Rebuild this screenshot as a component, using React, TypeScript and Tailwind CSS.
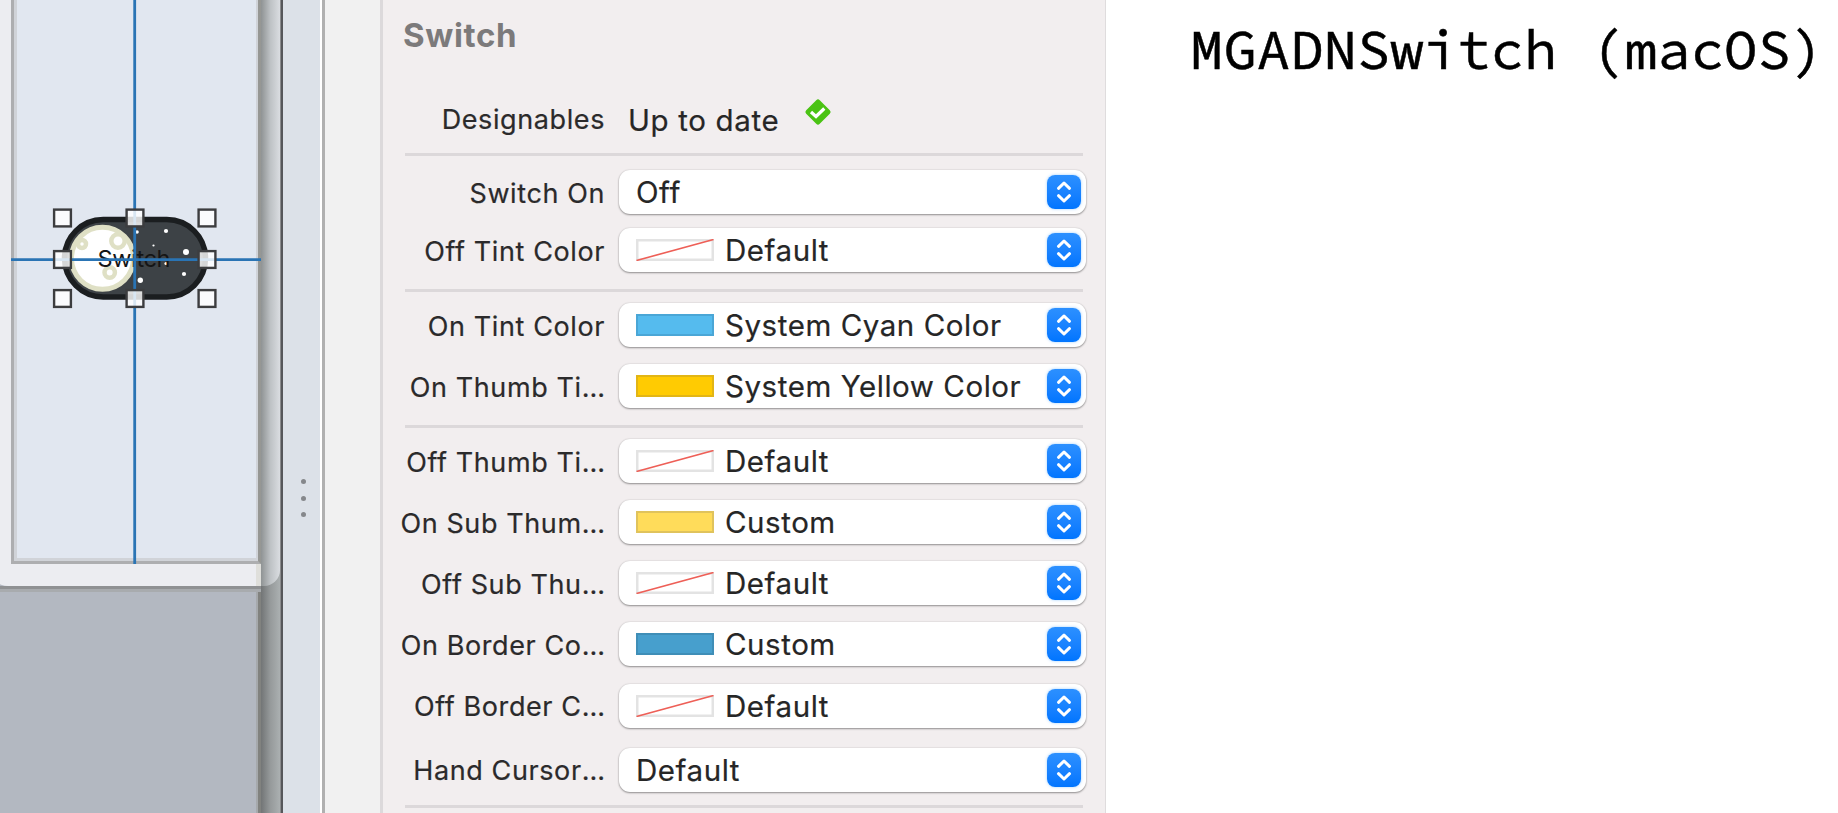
type Swatch = "none" | "cyan" | "yellow" | "lightYellow" | "blue";

const swatchClass: Record<Exclude<Swatch, "none">, string> = {
  cyan: "bg-[#55bbee] border-[#4aa6d6]",
  yellow: "bg-[#ffcb02] border-[#e2b515]",
  lightYellow: "bg-[#ffdc5a] border-[#e0c35c]",
  blue: "bg-[#479fcd] border-[#3f8eb7]",
};

function ColorWell({ swatch }: { swatch: Swatch }) {
  if (swatch === "none") {
    return (
      <svg width="78" height="22" className="mr-[11px] shrink-0">
        <rect x="1.25" y="1.25" width="75.5" height="19.5" fill="#fff" stroke="#e3e3e3" strokeWidth="2.5" />
        <path d="M0.5 21.5L77.5 0.5" stroke="#ee5f57" strokeWidth="1.6" />
      </svg>
    );
  }
  return <span className={`mr-[11px] h-[22px] w-[78px] shrink-0 border-2 ${swatchClass[swatch]}`} />;
}

function PopUp({ value, swatch }: { value: string; swatch?: Swatch }) {
  return (
    <div className="flex h-[44px] w-[467px] items-center rounded-[11px] bg-white pr-[5px] pl-[17px] shadow-[0_1px_2px_rgba(0,0,0,0.38),0_0_2px_rgba(0,0,0,0.14)]">
      {swatch && <ColorWell swatch={swatch} />}
      <span className="flex-1 text-[29.5px] leading-[44px] tracking-[0.55px] whitespace-nowrap text-[#262626] [-webkit-text-stroke:0.2px_#262626]">{value}</span>
      <span className="flex h-[34px] w-[34px] items-center justify-center rounded-[8px] bg-linear-to-b from-[#2c90ff] to-[#0075ff] shadow-[0_0_3px_rgba(60,160,255,0.5)]">
        <svg width="16" height="24" fill="none" stroke="#fff" strokeWidth="3" strokeLinecap="round" strokeLinejoin="round">
          <path d="M2.5 8.3L8 3L13.5 8.3M2.5 15.7L8 21L13.5 15.7" />
        </svg>
      </span>
    </div>
  );
}

function Label({ text }: { text: string }) {
  const truncated = text.endsWith("...");
  return (
    <span className="w-[222px] pt-[3px] text-right text-[27px] leading-[44px] tracking-[0.6px] whitespace-nowrap text-[#2b2a2b] [-webkit-text-stroke:0.2px_#2b2a2b]">
      {truncated ? text.slice(0, -3) : text}
      {truncated && <span className="tracking-[0px]">...</span>}
    </span>
  );
}

function Row({ label, value, swatch, className }: { label: string; value: string; swatch?: Swatch; className: string }) {
  return (
    <div className={`flex h-[44px] items-center gap-[14px] ${className}`}>
      <Label text={label} />
      <PopUp value={value} swatch={swatch} />
    </div>
  );
}

function Divider({ className }: { className: string }) {
  return <div className={`ml-[22px] h-[3px] w-[678px] bg-[#dcd8da] ${className}`} />;
}

const handles = [
  [62.5, 218], [135, 218], [207, 218],
  [62.5, 259.5], [207, 259.5],
  [62.5, 298.5], [135, 298.5], [207, 298.5],
];

const stars = [
  [137, 232, 1.8], [166, 231, 2.1], [153.5, 245.5, 1.1], [186, 252, 3],
  [166, 263.5, 1.6], [184, 274, 2.1], [140.3, 280.3, 2.7],
];

function SwitchArtwork() {
  return (
    <svg className="absolute top-0 left-0" width="261" height="564">
      <rect x="64.5" y="219.5" width="141" height="77.5" rx="38.7" fill="#3d4246" stroke="#1b1e20" strokeWidth="5.5" />
      <circle cx="102.5" cy="258.3" r="31" fill="#fff" stroke="#dfe0c5" strokeWidth="5" />
      <circle cx="118" cy="241" r="6.7" fill="#fff" stroke="#dfe0c5" strokeWidth="4.5" />
      <circle cx="82" cy="244" r="4" fill="#fff" stroke="#dfe0c5" strokeWidth="4.5" />
      <circle cx="109.7" cy="272.5" r="5.2" fill="#fff" stroke="#dfe0c5" strokeWidth="4.5" />
      {stars.map(([x, y, r]) => (
        <circle key={`${x}-${y}`} cx={x} cy={y} r={r} fill="#fff" />
      ))}
      <text x="97.5" y="267" fontSize="23.5" textLength="73" fill="#151515" fontFamily="Inter, sans-serif">Switch</text>
      <path d="M134.7 0V564M11 259.6H261" stroke="#2a74b4" strokeWidth="2.8" />
      {handles.map(([x, y]) => (
        <rect key={`${x}-${y}`} x={x - 8.4} y={y - 8.4} width="16.8" height="16.8" fill="#fff" fillOpacity="0.82" stroke="#3c3d3f" strokeWidth="2.4" />
      ))}
    </svg>
  );
}

function Canvas() {
  return (
    <div className="relative flex h-full w-[261px] flex-col overflow-hidden bg-[#b3b8c1]">
      <div className="-ml-[10px] h-[586px] rounded-bl-[18px] bg-[#ecedf1] pl-[21px]">
        <div className="h-[564px] w-[250px] border-r-[3px] border-b-[3px] border-l-[3px] border-[#adaeb0] border-r-[#969794]">
          <div className="h-full border-r-2 border-b-[3px] border-l-[3px] border-[#d0d3d8] bg-[#e1e7f0]" />
        </div>
        <div className="ml-auto h-[22px] w-[5px] bg-[#dfdfdb]" />
      </div>
      <div className="h-[3px] shrink-0 bg-[#8f9193]" />
      <div className="h-[3px] shrink-0 bg-[#a8abae]" />
      <div className="ml-auto w-[5px] flex-1 border-r-[3px] border-l-2 border-r-[#81827f] border-l-[#a6a9ac]" />
      <SwitchArtwork />
    </div>
  );
}

export default function App() {
  return (
    <div className="flex h-[813px] w-[1838px] overflow-hidden bg-white font-['Inter','Liberation_Sans',sans-serif]">
      <Canvas />
      <div className="h-full w-[19px] bg-linear-to-r from-[#727576] via-[#969a9b] to-[#abb0b1]">
        <div className="h-[586px] rounded-br-[16px] bg-linear-to-r from-[#8f9394] via-[#bec2c5] to-[#dadde1]" />
      </div>
      <div className="w-[3px] border-l border-[#8b8c8e] bg-[#56575a]" />
      <div className="flex w-[37px] flex-col items-center gap-[11.7px] bg-[#dce1e8] pt-[479px] pl-[4px]">
        <span className="h-[5px] w-[5px] rounded-full bg-[#85878b]" />
        <span className="h-[5px] w-[5px] rounded-full bg-[#85878b]" />
        <span className="h-[5px] w-[5px] rounded-full bg-[#85878b]" />
      </div>
      <div className="w-[2px] bg-white" />
      <div className="w-[3px] bg-[#b0b0b0]" />
      <div className="w-[55px] bg-[#f1f1f1]" />
      <div className="h-full w-[726px] border-r border-l-[3px] border-r-[#dfdcdd] border-l-[#dcd9db] bg-[#f2eeef]">
        <h1 className="mt-[14px] ml-[20px] h-[42px] text-[33px] leading-[42px] font-bold tracking-[0.65px] text-[#7c7a7b]">Switch</h1>
        <div className="mt-[40px] flex h-[44px] items-center">
          <Label text="Designables" />
          <span className="mt-[3px] ml-[23px] text-[29.5px] leading-[44px] tracking-[0.65px] text-[#262626] [-webkit-text-stroke:0.2px_#262626]">Up to date</span>
          <svg className="-mt-[13px] ml-[25px]" width="28" height="28">
            <rect x="4.4" y="4.4" width="19.2" height="19.2" rx="2.5" fill="#4bc314" transform="rotate(45 14 14)" />
            <path d="M7 14L12 18.5L20.3 10.5" fill="none" stroke="#fff" strokeWidth="3.2" />
          </svg>
        </div>
        <Divider className="mt-[13px]" />
        <Row label="Switch On" value="Off" className="mt-[14px]" />
        <Row label="Off Tint Color" value="Default" swatch="none" className="mt-[14px]" />
        <Divider className="mt-[17px]" />
        <Row label="On Tint Color" value="System Cyan Color" swatch="cyan" className="mt-[11px]" />
        <Row label="On Thumb Ti..." value="System Yellow Color" swatch="yellow" className="mt-[17px]" />
        <Divider className="mt-[17px]" />
        <Row label="Off Thumb Ti..." value="Default" swatch="none" className="mt-[11px]" />
        <Row label="On Sub Thum..." value="Custom" swatch="lightYellow" className="mt-[17px]" />
        <Row label="Off Sub Thu..." value="Default" swatch="none" className="mt-[17px]" />
        <Row label="On Border Co..." value="Custom" swatch="blue" className="mt-[17px]" />
        <Row label="Off Border C..." value="Default" swatch="none" className="mt-[17.5px]" />
        <Row label="Hand Cursor..." value="Default" className="mt-[20px]" />
        <Divider className="mt-[13.5px]" />
      </div>
      <div className="pt-[13px] pl-[84px] font-['Source_Code_Pro','Noto_Sans_Mono_CJK_JP','DejaVu_Sans_Mono',monospace] text-[55.5px] leading-[72px] tracking-[0.08px] whitespace-pre text-black [-webkit-text-stroke:0.5px_black]">MGADNSwitch (macOS)</div>
    </div>
  );
}
